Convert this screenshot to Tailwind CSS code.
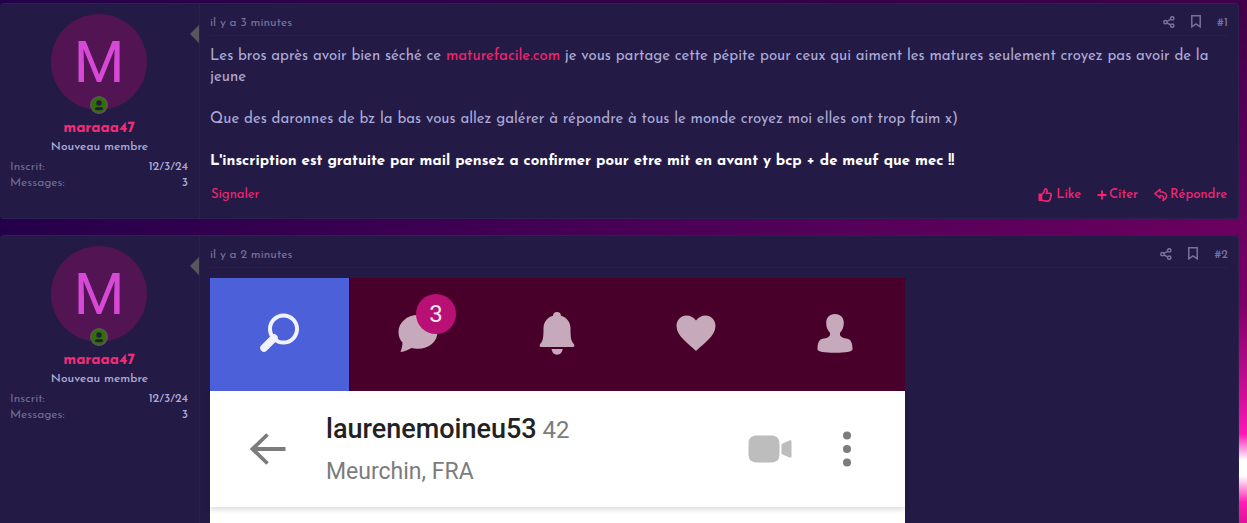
<!DOCTYPE html>
<html lang="fr">
<head>
<meta charset="utf-8">
<meta name="viewport" content="width=device-width, initial-scale=1">
<title>Discussion</title>
<script src="https://cdn.jsdelivr.net/npm/@tailwindcss/browser@4"></script>
</head>
<body class="h-screen overflow-hidden bg-[linear-gradient(to_right,#25004a,#25004a00),linear-gradient(to_bottom,#400049_0%,#6c0060_44%,#7d0064_58%,#cc0d96_75%,#ff18b6_83%,#ffffff_88%,#ffffff_91%,#ff20b5_96%,#e0109a_100%)] font-['Josefin_Sans',Lato,sans-serif] text-[#aeabd8]">
<svg class="hidden" aria-hidden="true">
  <symbol id="share" viewBox="0 0 12 12"><g fill="none" stroke="currentColor" stroke-width="1.5"><circle cx="2.400" cy="6.200" r="1.600"/><circle cx="9.200" cy="2.400" r="1.700"/><circle cx="9.200" cy="9.600" r="1.700"/><path d="M4 5.400 7.600 3.300M4 7 7.600 8.800"/></g></symbol>
  <symbol id="bookmark" viewBox="0 0 10 13"><path d="M.8.8h8.400v11L5 9 .8 11.800z" fill="none" stroke="currentColor" stroke-width="1.500"/></symbol>
  <symbol id="member" viewBox="0 0 18 18"><circle cx="9" cy="9" r="8.200" fill="#327000" stroke="#5a565e" stroke-width="1.600"/><circle cx="9" cy="7" r="2.700" fill="#231b45"/><path d="M4.900 13.300c0-1.700 1.200-2.400 2.400-2.400 1 .5 2.400.5 3.400 0 1.200 0 2.400.7 2.400 2.400 0 1.300-8.200 1.300-8.200 0z" fill="#231b45"/></symbol>
</svg>
<main class="mr-2 flex h-full flex-col gap-4 pt-[3px]">

  <article class="flex shrink-0 rounded-[4px] border border-l-0 border-[#2a2350] bg-[#231b45]">
    <aside class="relative flex w-[200px] shrink-0 flex-col border-r border-[#292150] px-[10px] pt-[10px]">
      <a href="#maraaa47" aria-label="maraaa47" class="relative ml-[41px] flex size-24 items-center justify-center rounded-full bg-[#521452] font-[Roboto,sans-serif] text-[58px] leading-none text-[#d649d6]">M
        <svg class="absolute -bottom-1 left-[39px] size-[18px]"><use href="#member"/></svg>
      </a>
      <a href="#maraaa47" class="mt-[9px] mr-[1px] text-center text-[15px] leading-5 font-black text-[#f52b79]">maraaa47</a>
      <p class="text-center text-xs leading-4 font-medium">Nouveau membre</p>
      <dl class="mt-1 grid grid-cols-[1fr_auto] pr-[1px] text-xs leading-4">
        <dt class="text-[#706b94]">Inscrit:</dt><dd class="text-right font-medium">12/3/24</dd>
        <dt class="text-[#706b94]">Messages:</dt><dd class="text-right font-medium">3</dd>
      </dl>
      <svg class="absolute top-[21px] right-0 h-[18px] w-[9px]" viewBox="0 0 9 18"><path d="M9 0v18L0 9z" fill="#5a565e"/></svg>
    </aside>
    <div class="min-w-0 flex-1 px-[10px] pb-[13px]">
      <header class="flex h-8 items-center justify-between border-b border-[#272049] pt-[6px] text-xs text-[#77739e]">
        <time>il y a 3 minutes</time>
        <div class="flex items-center pb-[2px]">
          <button aria-label="Partager" class="mr-4"><svg class="size-3"><use href="#share"/></svg></button>
          <button aria-label="Signet" class="mr-4"><svg class="h-[13px] w-[10px]"><use href="#bookmark"/></svg></button>
          <a href="#1" class="pt-[2px] font-medium">#1</a>
        </div>
      </header>
      <div class="mt-[10px] text-[15px] leading-[21px]">
        <p>Les bros après avoir bien séché ce <a href="#" class="text-[#f52472]">maturefacile.com</a> je vous partage cette pépite pour ceux qui aiment les matures seulement croyez pas avoir de la jeune</p>
        <p class="mt-[21px]">Que des daronnes de bz la bas vous allez galérer à répondre à tous le monde croyez moi elles ont trop faim x)</p>
        <p class="mt-[21px] font-bold text-white">L'inscription est gratuite par mail pensez a confirmer pour etre mit en avant y bcp + de meuf que mec !!</p>
      </div>
      <footer class="mt-[13px] flex h-5 items-center justify-between text-[13px] text-[#f52472]">
        <a href="#" class="pl-[1px]">Signaler</a>
        <div class="flex gap-4 pr-[1px]">
          <button class="flex items-center gap-1 font-medium"><svg class="size-[14px]" viewBox="0 0 14 14"><path d="M.5 5.500h3.800V13H.5z" fill="currentColor"/><path d="M4 6.200C6 5 6.400 3.500 6.700 1.600 7 .4 9.200.6 9.200 2.800c0 1-.4 1.800-.7 2.500h3.400c1.600 0 1.800 1.800.8 2.400.6.7.3 1.700-.4 2 .3.900 0 1.500-.6 1.800 0 1-.6 1.600-1.800 1.600H8c-1.600 0-2.300-.8-4-.9" fill="none" stroke="currentColor" stroke-width="1.600"/></svg>Like</button>
          <button class="flex items-center gap-[2px] font-medium"><svg class="size-[10px]" viewBox="0 0 10 10"><path d="M5 .5v9M.5 5h9" stroke="currentColor" stroke-width="1.900"/></svg>Citer</button>
          <button class="flex items-center gap-[2px] font-medium"><svg class="size-[14px]" viewBox="0 0 14 14"><path d="M6 1.200.9 5.600 6 10V7.400c3.400 0 4.300 1.500 3 5.200 5-2.800 5.300-8.500-3-8.800z" fill="none" stroke="currentColor" stroke-width="1.400" stroke-linejoin="round"/></svg>Répondre</button>
        </div>
      </footer>
    </div>
  </article>

  <article class="flex min-h-0 flex-1 rounded-t-[4px] border-t border-r border-[#2a2350] bg-[#231b45]">
    <aside class="relative flex w-[200px] shrink-0 flex-col border-r border-[#292150] px-[10px] pt-[10px]">
      <a href="#maraaa47" aria-label="maraaa47" class="relative ml-[41px] flex size-24 shrink-0 items-center justify-center rounded-full bg-[#521452] font-[Roboto,sans-serif] text-[58px] leading-none text-[#d649d6]">M
        <svg class="absolute -bottom-1 left-[39px] size-[18px]"><use href="#member"/></svg>
      </a>
      <a href="#maraaa47" class="mt-[9px] mr-[1px] text-center text-[15px] leading-5 font-black text-[#f52b79]">maraaa47</a>
      <p class="text-center text-xs leading-4 font-medium">Nouveau membre</p>
      <dl class="mt-1 grid grid-cols-[1fr_auto] pr-[1px] text-xs leading-4">
        <dt class="text-[#706b94]">Inscrit:</dt><dd class="text-right font-medium">12/3/24</dd>
        <dt class="text-[#706b94]">Messages:</dt><dd class="text-right font-medium">3</dd>
      </dl>
      <svg class="absolute top-[21px] right-0 h-[18px] w-[9px]" viewBox="0 0 9 18"><path d="M9 0v18L0 9z" fill="#5a565e"/></svg>
    </aside>
    <div class="flex min-w-0 flex-1 flex-col px-[10px]">
      <header class="flex h-8 shrink-0 items-center justify-between border-b border-[#272049] pt-[6px] text-xs text-[#77739e]">
        <time>il y a 2 minutes</time>
        <div class="flex items-center pb-[2px]">
          <button aria-label="Partager" class="mr-4"><svg class="size-3"><use href="#share"/></svg></button>
          <button aria-label="Signet" class="mr-4"><svg class="h-[13px] w-[10px]"><use href="#bookmark"/></svg></button>
          <a href="#2" class="pt-[2px] font-medium">#2</a>
        </div>
      </header>
      <section class="mt-[10px] w-full max-w-[695px] flex-1 bg-white font-[Roboto,sans-serif]">
        <nav class="grid h-[113px] grid-cols-5 bg-[#48002b] text-[#c6aabb]">
          <a href="#" aria-label="Recherche" class="flex items-center justify-center bg-[#4b60d9] pr-[1px] pb-[3px] text-[#f0f2ff]"><svg class="size-10" viewBox="0 0 40 40"><circle cx="24.500" cy="16" r="13.500" fill="none" stroke="currentColor" stroke-width="4"/><path d="M15 25 5 35" stroke="currentColor" stroke-width="7.500" stroke-linecap="round"/></svg></a>
          <a href="#" aria-label="Messages" class="flex items-center justify-center pr-[1px] pb-[3px]"><span class="relative"><svg class="size-10" viewBox="0 0 40 40"><path d="M20 2C9 2 .5 9.500.5 19c0 4.500 1.500 8 4 10.500C4.500 33 3.500 36 2.500 39c4-.5 8-2.500 11-4 2 .5 4 .8 6.500.8 11 0 19.500-7 19.500-17S31 2 20 2z" fill="currentColor"/></svg><span class="absolute -top-[19px] left-[18px] flex size-10 items-center justify-center rounded-full bg-[#b91076] text-2xl leading-none text-[#f8e6f2]">3</span></span></a>
          <a href="#" aria-label="Notifications" class="flex items-center justify-center pr-[1px] pb-[3px]"><svg class="h-11 w-9" viewBox="0 0 36 44"><path d="M18 1c2.500 0 4 1.500 4 3.800 6 1.800 9.500 6.500 9.500 12.700 0 9 .5 12.500 3.300 15.500 1 1.500.7 3-1 3H2.200c-1.700 0-2-1.500-1-3 2.800-3 3.300-6.500 3.300-15.500C4.500 11.300 8 6.600 14 4.800 14 2.500 15.500 1 18 1zM12.500 38h11.200c-.5 3.500-2.500 5.700-5.600 5.700s-5.100-2.200-5.600-5.700z" fill="currentColor"/></svg></a>
          <a href="#" aria-label="Favoris" class="flex items-center justify-center pr-[1px] pb-[3px]"><svg class="size-10" viewBox="0 0 40 40"><path d="M20 38C12 30 .5 23 .5 13 .5 7 5 2.500 10.500 2.500c4 0 7.500 2 9.500 5 2-3 5.500-5 9.500-5C35 2.500 39.500 7 39.500 13c0 10-11.500 17-19.500 25z" fill="currentColor"/></svg></a>
          <a href="#" aria-label="Profil" class="flex items-center justify-center pr-[1px] pb-[3px]"><svg class="size-10" viewBox="0 0 40 40"><path d="M20 1c5.500 0 8.800 3.600 8.800 9 0 4-1.300 7.500-3.800 9.800v2.400c1.500 2.600 4 2.800 6.500 3.300 4.500.8 6 4 6 11 0 2-7 3.300-17.500 3.300S2.500 38.500 2.500 36.500c0-7 1.500-10.200 6-11 2.500-.5 5-.7 6.500-3.300v-2.400c-2.500-2.300-3.800-5.800-3.800-9.800 0-5.400 3.300-9 8.800-9z" fill="currentColor"/></svg></a>
        </nav>
        <div class="flex h-[116px] items-center bg-white pr-[54px] pl-10 text-[#7c7c7c] shadow-[0_2px_6px_rgba(0,0,0,0.16)]">
          <button aria-label="Retour"><svg class="h-8 w-9" viewBox="0 0 36 32"><path d="M35.500 16H2.500M17.500 1.500 2.500 16l15 14.500" fill="none" stroke="currentColor" stroke-width="3.800"/></svg></button>
          <div class="mt-[5px] ml-10 flex-1">
            <h2 class="text-2xl leading-10"><span class="text-[27px] font-medium text-[#222]">laurenemoineu53</span> 42</h2>
            <p class="text-[23px] leading-[44px]">Meurchin, FRA</p>
          </div>
          <button aria-label="Appel vidéo" class="mr-[51px]"><svg class="h-7 w-11" viewBox="0 0 44 28"><path d="M10 .5h12c7 0 9.500 2.500 9.500 9v9c0 6.500-2.500 9-9.500 9H10c-7 0-9.500-2.500-9.500-9v-9C.5 3 3 .5 10 .5zM33.500 9l8-3.500c1-.5 2 0 2 1v15c0 1-1 1.500-2 1l-8-3.500z" fill="#bdbdbd"/></svg></button>
          <button aria-label="Menu"><svg class="h-9 w-2" viewBox="0 0 8 36"><g fill="currentColor"><circle cx="4" cy="4.500" r="4"/><circle cx="4" cy="18" r="4"/><circle cx="4" cy="31.500" r="4"/></g></svg></button>
        </div>
      </section>
    </div>
  </article>
</main>
</body>
</html>
